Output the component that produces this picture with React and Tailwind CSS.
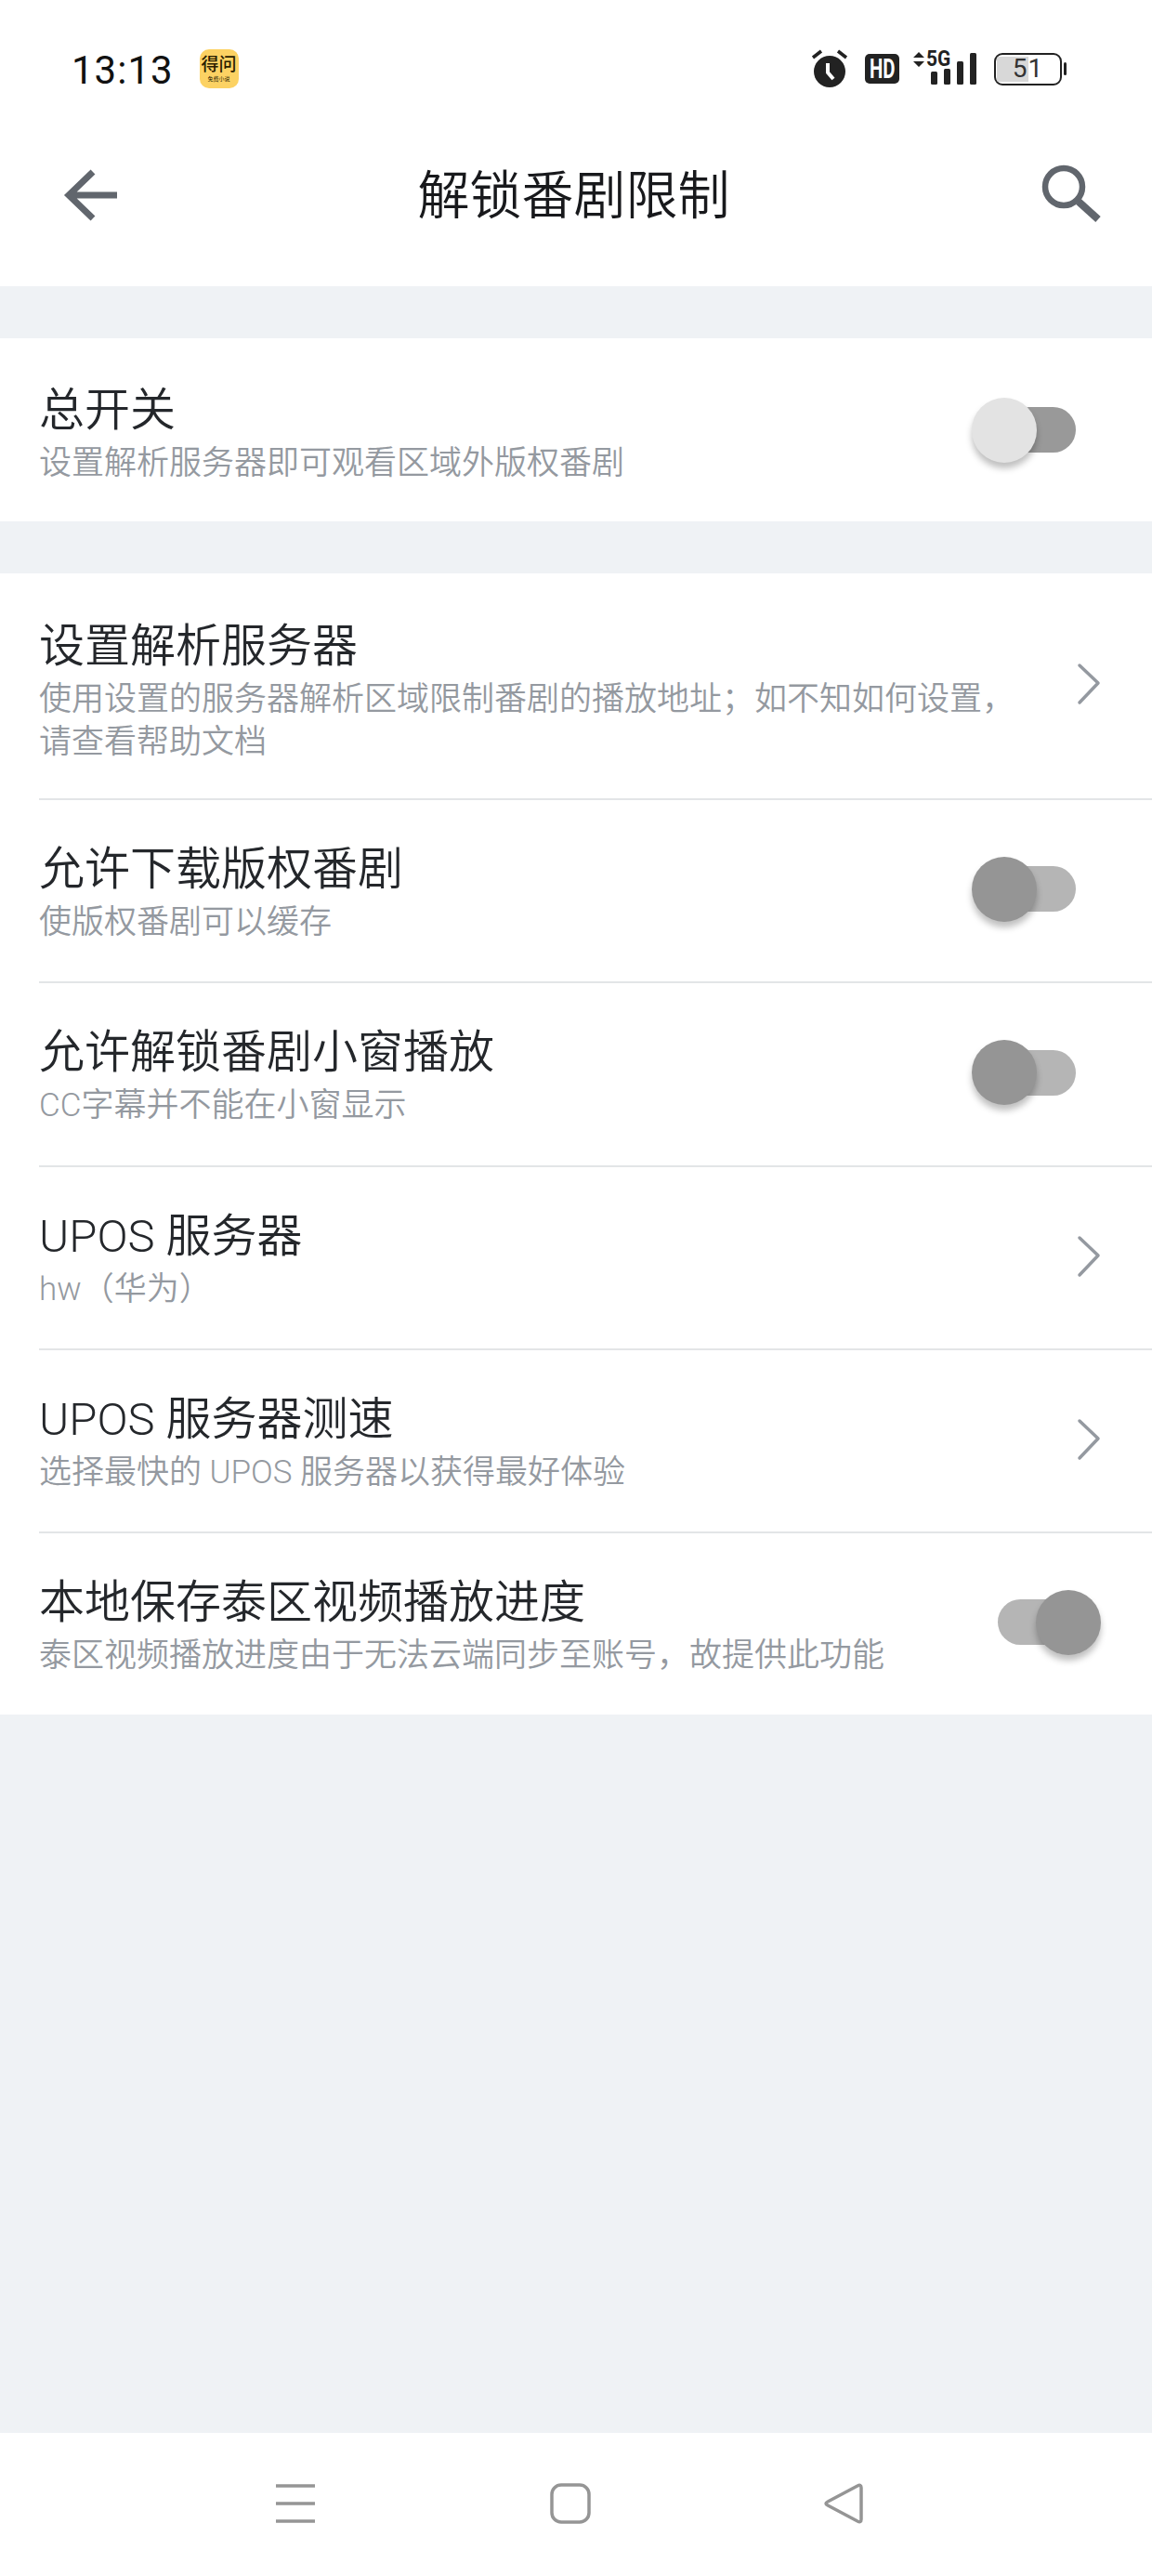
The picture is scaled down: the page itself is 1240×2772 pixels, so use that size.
const CJK = `font-['Roboto','Noto_Sans_CJK_SC',sans-serif]`;

function Toggle({ on, master }) {
  const track = master ? "bg-[#999999]" : "bg-[#b5b5b5]";
  const thumb = master ? "bg-[#e3e3e3]" : "bg-[#959595]";
  return (
    <div className={`relative w-[84px] h-[49px] rounded-full ${track}`}>
      <div
        className={`absolute top-[-10.5px] w-[70px] h-[70px] rounded-full shadow-[0_6px_7px_rgba(0,0,0,0.25)] ${thumb} ${on ? "left-[41px]" : "left-[-28px]"}`}
      />
    </div>
  );
}

function Chevron() {
  return (
    <svg width="26" height="46" viewBox="0 0 26 46" fill="none" stroke="#9499a0" strokeWidth="3.5" strokeLinecap="round" strokeLinejoin="round">
      <path d="M3 3 L23 22 L3 43" />
    </svg>
  );
}

function Row({ title, sub, control, height, divider, first }) {
  return (
    <div className="pl-[42px]">
      <div className={`flex items-center ${height} ${divider ? "border-t-2 border-[#e3e5e7] pb-[4px]" : ""}`}>
        <div className={`flex-1 min-w-0 ${first ? "mt-[7px]" : "mt-[7px] mb-[3px]"}`}>
          <div className="text-[49px] leading-[68px] font-[350] text-[#24272b]">{title}</div>
          <div className="text-[35px] leading-[46px] font-[350] text-[#9499a0] w-[1050px]">{sub}</div>
        </div>
        {control === "chevron" ? (
          <div className={`w-[81px] flex justify-start ${first ? "mb-[4px]" : ""}`}><Chevron /></div>
        ) : control === "off" ? (
          <div className="w-[166px]"><Toggle /></div>
        ) : control === "master" ? (
          <div className="w-[166px]"><Toggle master /></div>
        ) : (
          <div className="w-[166px]"><Toggle on /></div>
        )}
      </div>
    </div>
  );
}

export default function App() {
  return (
    <div className={`w-[1240px] h-[2772px] flex flex-col bg-[#eff2f5] ${CJK}`}>
      <div className="h-[308px] bg-white">
        <div className="h-[140px] flex items-center pt-[8px] relative">
          <div className="ml-[77px] mt-[4px] text-[42px] leading-none tracking-[1px] text-[#111111] font-['Roboto',sans-serif]">13:13</div>
          <div className="ml-[28px] w-[42px] h-[42px] rounded-[10px] bg-[#fcd263] flex flex-col items-center justify-center text-[#2a2000]">
            <div className="text-[19px] leading-[22px] font-medium">得问</div>
            <div className="text-[6px] leading-[8px]">免费小说</div>
          </div>
          <div className="flex-1" />
          <svg width="40" height="42" viewBox="0 0 40 42" className="mr-[18px]">
            <circle cx="20" cy="24" r="17" fill="#222222" />
            <path d="M2 9 L11 2 M38 9 L29 2" stroke="#222222" strokeWidth="3.5" />
            <path d="M18 15 L18 25 L24 32" stroke="#ffffff" strokeWidth="4" fill="none" />
          </svg>
          <div className="w-[37px] h-[32px] rounded-[5px] bg-[#222222] mr-[14px] flex items-center justify-center">
            <span className="text-white text-[29px] leading-none font-bold font-['Roboto',sans-serif] scale-x-[0.7]">HD</span>
          </div>
          <div className="relative w-[70px] h-[36px] mr-[18px] self-center">
            <svg width="70" height="36" viewBox="0 0 70 36" className="absolute left-0 top-0">
              <path d="M1 6 L7 0 L13 6 Z M1 10 L13 10 L7 16 Z" fill="#222222" />
              <rect x="20" y="21" width="7" height="14" rx="1.5" fill="#222222" />
              <rect x="34" y="18" width="7" height="17" rx="1.5" fill="#222222" />
              <rect x="48" y="10" width="7" height="25" rx="1.5" fill="#222222" />
              <rect x="62" y="1" width="7" height="34" rx="1.5" fill="#222222" />
            </svg>
            <div className="absolute left-[13px] top-[-5px] text-[24px] leading-[24px] font-bold text-[#222222] font-['Roboto',sans-serif] scale-x-[0.87]">5G</div>
          </div>
          <div className="relative w-[73px] h-[35px] rounded-[9px] border-[2.5px] border-[#222222] overflow-hidden flex items-center justify-center">
            <div className="absolute left-[1px] top-[2px] bottom-[2px] w-[34px] bg-[#d8d8d8]" />
            <div className="relative text-[28px] leading-none text-[#333333] font-['Roboto',sans-serif] tracking-[1px]">51</div>
          </div>
          <div className="ml-[2px] w-[3px] h-[14px] rounded-full bg-[#222222] mr-[92px]" />
        </div>
        <div className="h-[140px] flex items-center justify-between relative">
          <svg width="60" height="60" viewBox="0 0 60 60" className="ml-[68px]">
            <path d="M58 30 L6 30 M32 5 L6 30 L32 55" fill="none" stroke="#61666d" strokeWidth="7" />
          </svg>
          <div className="text-[56px] leading-none font-[350] text-[#18191c] mr-[13px] mt-[2px]">解锁番剧限制</div>
          <svg width="68" height="68" viewBox="0 0 68 68" className="mr-[52px]">
            <circle cx="25" cy="25" r="20" fill="none" stroke="#61666d" strokeWidth="6.5" />
            <path d="M41 41 L62 60" stroke="#61666d" strokeWidth="8" />
          </svg>
        </div>
      </div>

      <div className="mt-[56px] bg-white">
        <Row title="总开关" sub="设置解析服务器即可观看区域外版权番剧" control="master" height="h-[197px]" />
      </div>

      <div className="mt-[56px] bg-white">
        <Row first title="设置解析服务器" sub="使用设置的服务器解析区域限制番剧的播放地址；如不知如何设置，请查看帮助文档" control="chevron" height="h-[242px]" />
        <Row divider title="允许下载版权番剧" sub="使版权番剧可以缓存" control="off" height="h-[197px]" />
        <Row divider title="允许解锁番剧小窗播放" sub="CC字幕并不能在小窗显示" control="off" height="h-[198px]" />
        <Row divider title="UPOS 服务器" sub="hw（华为）" control="chevron" height="h-[197px]" />
        <Row divider title="UPOS 服务器测速" sub="选择最快的 UPOS 服务器以获得最好体验" control="chevron" height="h-[197px]" />
        <Row divider title="本地保存泰区视频播放进度" sub="泰区视频播放进度由于无法云端同步至账号，故提供此功能" control="on" height="h-[197px]" />
      </div>

      <div className="flex-1" />

      <div className="h-[154px] bg-white flex items-center pl-[296px] pb-[2px]">
        <svg width="44" height="44" viewBox="0 0 44 44" stroke="#959595" strokeWidth="3.5">
          <path d="M1 3 H43 M1 22 H43 M1 41 H43" />
        </svg>
        <svg width="44" height="44" viewBox="0 0 44 44" fill="none" stroke="#959595" strokeWidth="3.5" className="ml-[252px]">
          <rect x="2" y="2" width="40" height="40" rx="10" />
        </svg>
        <svg width="44" height="44" viewBox="0 0 44 44" fill="none" stroke="#959595" strokeWidth="3.5" strokeLinejoin="round" className="ml-[250px]">
          <path d="M3 22 Q3 21 5 20 L37 3 Q41 1 41 5 V39 Q41 43 37 41 L5 24 Q3 23 3 22 Z" />
        </svg>
      </div>
    </div>
  );
}
